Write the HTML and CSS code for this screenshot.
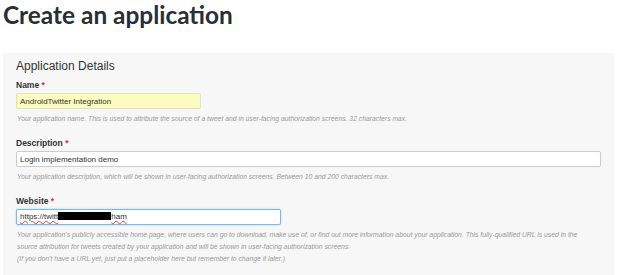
FILE: index.html
```html
<!DOCTYPE html>
<html lang="en">
<head>
  <meta charset="UTF-8" />
  <title>Create an application</title>
  <link rel="stylesheet" href="styles.css">
</head>
<body>
  <h1>Create an application</h1>

  <div class="panel">
    <h2>Application Details</h2>

    <div class="field">
      <label>Name <span class="req">*</span></label>
      <input type="text" class="name-input" value="AndroidTwitter Integration">
      <p class="help">Your application name. This is used to attribute the source of a tweet and in user-facing authorization screens. 32 characters max.</p>
    </div>

    <div class="field">
      <label>Description <span class="req">*</span></label>
      <input type="text" class="desc-input" value="Login implementation demo">
      <p class="help">Your application description, which will be shown in user-facing authorization screens. Between 10 and 200 characters max.</p>
    </div>

    <div class="field">
      <label>Website <span class="req">*</span></label>
      <div class="url-input"><span class="typo">https://twitt</span><span class="redact"></span><span class="typo">ham</span></div>
      <p class="help">Your application's publicly accessible home page, where users can go to download, make use of, or find out more information about your application. This fully-qualified URL is used in the<br>
        source attribution for tweets created by your application and will be shown in user-facing authorization screens.<br>
        (If you don't have a URL yet, just put a placeholder here but remember to change it later.)</p>
    </div>
  </div>
</body>
</html>
```

FILE: styles.css
```css
body {
  margin: 0;
  padding: 0 10px 0 3px;
  background: #fff;
  font-family: "Liberation Sans", Arial, sans-serif;
  color: #333;
  overflow: hidden;
}
h1 {
  font-family: Lato, "Open Sans", sans-serif;
  font-size: 24.4px;
  font-weight: 700;
  color: #292f33;
  margin: 0;
  height: 53px;
  line-height: 30px;
}
.panel {
  box-sizing: border-box;
  background: #f7f7f7;
  padding: 4px 14px 0 13px;
  height: 222px;
}
h2 {
  font-size: 12px;
  font-weight: normal;
  color: #333;
  margin: 0 0 5px 0;
  line-height: 18px;
}
.field {
  margin-bottom: 13px;
}
label {
  display: block;
  font-size: 8.5px;
  font-weight: bold;
  color: #333;
  line-height: 11px;
  margin-bottom: 2px;
}
.req {
  color: #e0245e;
}
input, .url-input {
  display: block;
  box-sizing: border-box;
  height: 16px;
  padding: 0 3px;
  font-family: "Liberation Sans", Arial, sans-serif;
  font-size: 8px;
  color: #333;
  background: #fff;
  border: 1px solid #ccc;
  border-radius: 2px;
  margin: 0;
}
.name-input {
  width: 185px;
  background: #fbfcc0;
  border-color: #e2e2c0;
}
.desc-input {
  width: 585px;
}
.url-input {
  width: 265px;
  line-height: 14px;
  border-color: #7fb8e6;
  box-shadow: 0 0 2px rgba(102, 175, 233, 0.6);
  white-space: nowrap;
}
.typo {
  text-decoration: underline wavy #e04040;
  text-decoration-thickness: 1px;
}
.redact {
  display: inline-block;
  width: 53px;
  height: 8px;
  background: #000;
  vertical-align: -1px;
}
.help {
  font-size: 6.8px;
  font-style: italic;
  color: #999;
  margin: 4px 0 0 1px;
  line-height: 12px;
  white-space: nowrap;
}
```
